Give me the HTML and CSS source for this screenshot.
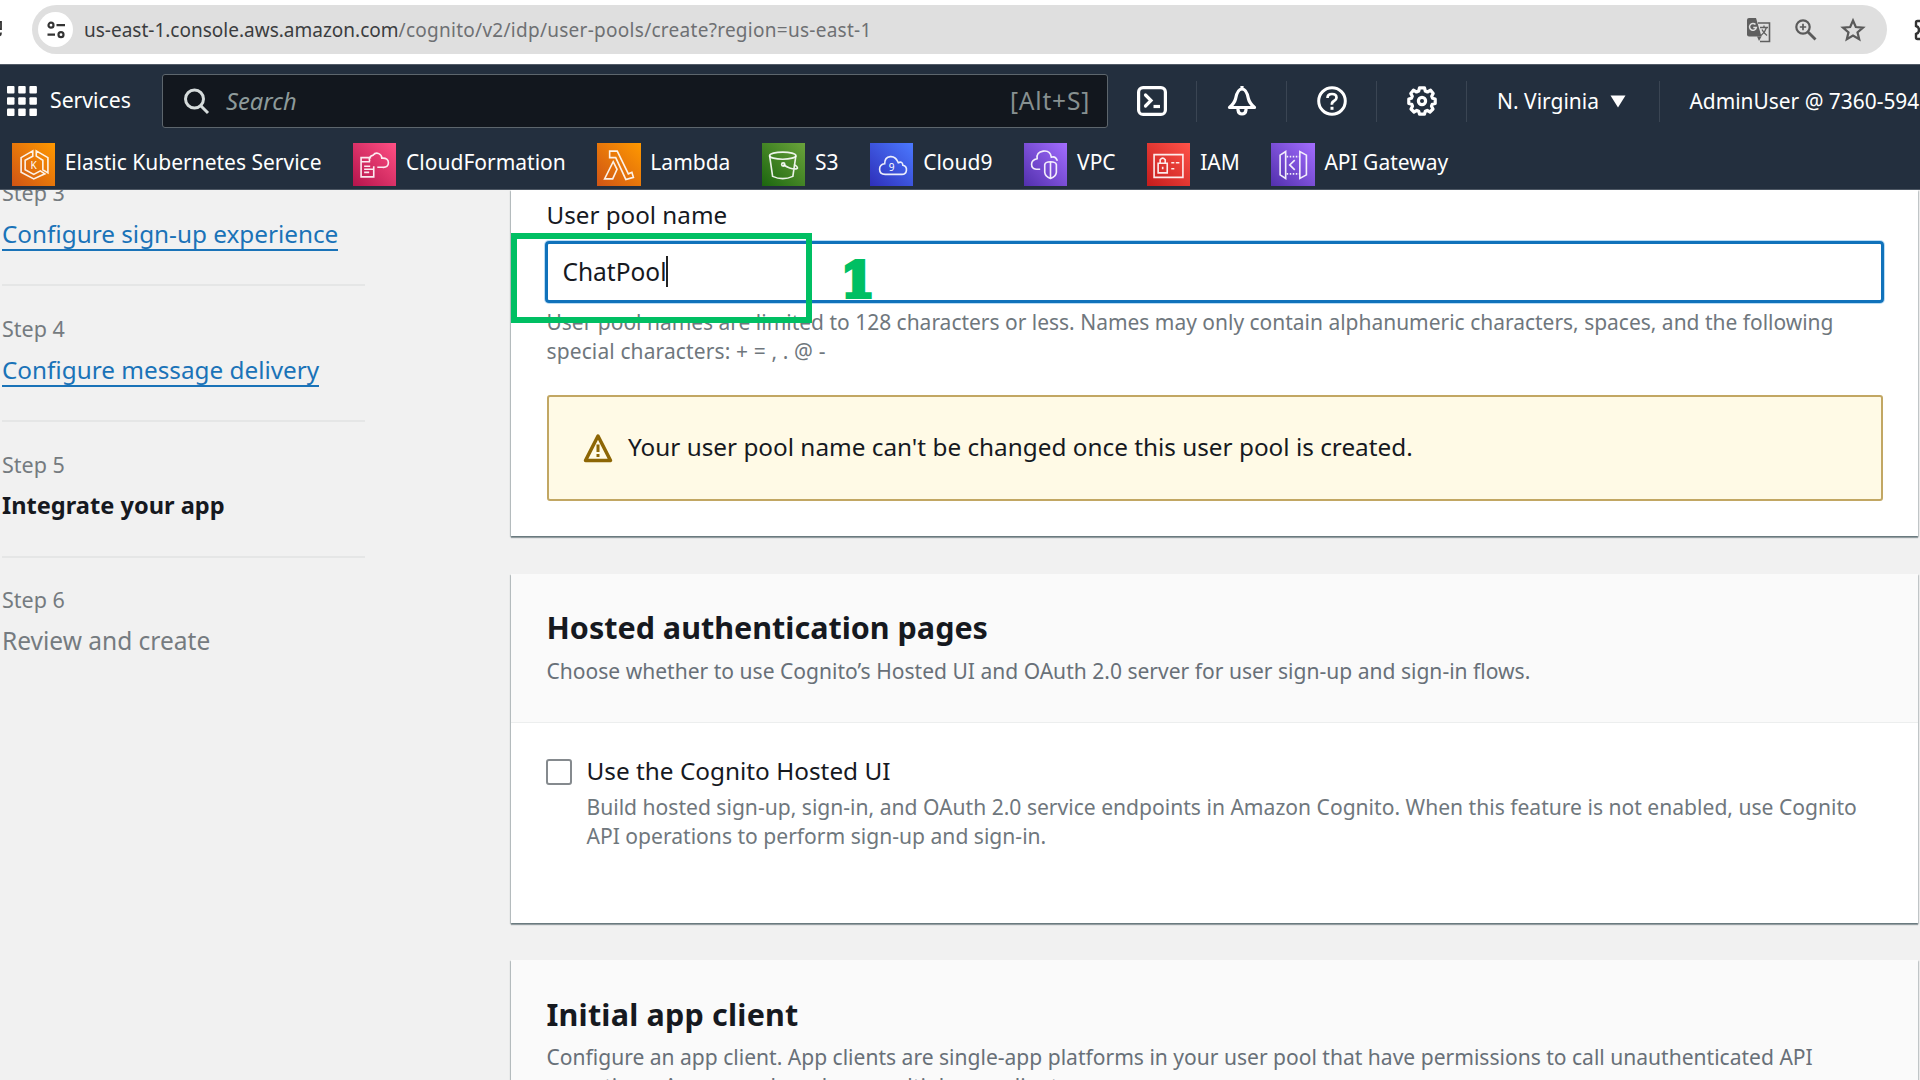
FILE: index.html
```html
<!DOCTYPE html>
<html lang="en">
<head>
<meta charset="utf-8">
<title>Create user pool</title>
<link rel="stylesheet" href="styles.css">
</head>
<body>
<div class="browser">
  <svg class="reload" width="4" height="20" viewBox="0 0 4 20"><path d="M0 2h1v7H0M0 15.500q1-1 1-3" fill="none" stroke="#333" stroke-width="1.800"/></svg>
  <div class="omnibox">
    <span class="site-info"><svg width="20" height="20" viewBox="0 0 20 20" fill="none" stroke="#333" stroke-width="2.200"><circle cx="5" cy="5.200" r="2.500"/><path d="M10.500 5.200H19M1.500 14.700H9"/><circle cx="15" cy="14.700" r="2.500"/></svg></span>
    <span class="host">us-east-1.console.aws.amazon.com</span><span class="path">/cognito/v2/idp/user-pools/create?region=us-east-1</span>
    <div class="omni-icons">
      <svg width="26" height="26" viewBox="0 0 26 26"><path d="M12 6H23.500V24.500H14" fill="none" stroke="#5f5f5f" stroke-width="1.600"/><path d="M1 3Q1 1 3 1H10L15.500 19.500H3Q1 19.500 1 17.500Z" fill="#5f5f5f"/><path d="M11 19.500H15.500L13 24Z" fill="#5f5f5f"/><path d="M9.500 7.600A3.400 3.400 0 1 0 10.300 10.500H7.300" fill="none" stroke="#e0e0e0" stroke-width="1.500"/><path d="M14 10.500H22M18 8.500V10.500M20.500 10.500Q19 15.500 15 18.500M16 12.500Q17.500 16 21 18.500" fill="none" stroke="#5f5f5f" stroke-width="1.300"/></svg>
      <svg width="24" height="24" viewBox="0 0 24 24" fill="none" stroke="#5a5a5a" stroke-width="2.200"><circle cx="9" cy="9" r="6.700"/><path d="M14 14L21.500 21.500" stroke-width="2.800"/><path d="M9 5.800V12.200M5.800 9H12.200" stroke-width="1.700"/></svg>
      <svg width="26" height="26" viewBox="0 0 26 26"><path d="M13 3.500L15.800 10L23 10.600L17.500 15.300L19.200 22.300L13 18.600L6.800 22.300L8.500 15.300L3 10.600L10.200 10Z" fill="none" stroke="#5a5a5a" stroke-width="2.200"/></svg>
    </div>
  </div>
  <svg class="extension" width="6" height="24" viewBox="0 0 6 24"><path d="M7 3H3.500Q2 3 2 4.500V8Q5 9 5 12T2 16V19.500Q2 21 3.500 21H7" fill="none" stroke="#333" stroke-width="2.400"/></svg>
</div>

<header class="nav">
  <div class="nav-top">
    <svg class="grid-icon" width="30" height="30" viewBox="0 0 30 30" fill="#fff"><rect width="7.500" height="7.500" rx="1"/><rect x="11.200" width="7.500" height="7.500" rx="1"/><rect x="22.400" width="7.500" height="7.500" rx="1"/><rect y="11.200" width="7.500" height="7.500" rx="1"/><rect x="11.200" y="11.200" width="7.500" height="7.500" rx="1"/><rect x="22.400" y="11.200" width="7.500" height="7.500" rx="1"/><rect y="22.400" width="7.500" height="7.500" rx="1"/><rect x="11.200" y="22.400" width="7.500" height="7.500" rx="1"/><rect x="22.400" y="22.400" width="7.500" height="7.500" rx="1"/></svg>
    <span class="services">Services</span>
    <div class="search">
      <svg width="27" height="27" viewBox="0 0 27 27" fill="none" stroke="#d5dbdb" stroke-width="3"><circle cx="11.500" cy="11" r="9"/><path d="M17.500 17.500L25 25"/></svg>
      <span class="placeholder">Search</span>
      <span class="shortcut">[Alt+S]</span>
    </div>
    <div class="tools">
      <span class="tool"><svg width="30" height="30" viewBox="0 0 30 30" fill="none" stroke="#fff" stroke-width="3.200"><rect x="1.600" y="1.600" width="26.800" height="26.800" rx="4.500"/><path d="M8.500 9L14 14.500L8.500 20" stroke-linecap="round"/><path d="M16.500 20.500H23"/></svg></span>
      <span class="tool"><svg width="30" height="30" viewBox="0 0 30 30" fill="none" stroke="#fff" stroke-width="3.200"><path d="M15 0V3M15 3C11 3 9.500 7.500 8.500 13Q7.500 17 2.500 21.500H27.500Q22.500 17 21.500 13C20.500 7.500 19 3 15 3Z" stroke-linejoin="round"/><path d="M11 22V24Q11.500 28 15 28T19 24V22"/></svg></span>
      <span class="tool"><svg width="30" height="30" viewBox="0 0 30 30" fill="none" stroke="#fff" stroke-width="3"><circle cx="15" cy="15" r="13.300"/><path d="M10.500 12Q10.500 8 15 8T19.500 11.700Q19.500 13.500 17 15T15 18.800" stroke-width="2.700"/><path d="M15 20.800V23.800" stroke-width="3"/></svg></span>
      <span class="tool"><svg width="30" height="30" viewBox="0 0 30 30" fill="none" stroke="#fff" stroke-width="3.200" stroke-linejoin="round"><path d="M12.500 1.800H17.500L18.300 5L20.500 6L23.600 4.200L26.200 7.500L24.700 10.200L25.500 12.300L28.200 13V17.500L25.300 18.200L24.500 20.200L26 23L23 26L20.200 24.400L18.300 25.200L17.500 28.200H12.500L11.700 25.200L9.800 24.400L7 26L4 23L5.500 20.200L4.700 18.200L1.800 17.500V13L4.500 12.300L5.300 10.200L3.800 7.500L6.400 4.200L9.500 6L11.700 5Z"/><circle cx="15" cy="15" r="3.600"/></svg></span>
    </div>
    <div class="region">N. Virginia<svg width="16" height="13" viewBox="0 0 16 13"><path d="M.5 .5H15.500L8 12.500Z" fill="#fff"/></svg></div>
    <div class="account">AdminUser @ 7360-594</div>
  </div>
  <div class="favorites">
    <div class="fav"><svg class="tile orange" viewBox="0 0 43 43"><path d="M20.500 7.800L9 14.500V29L21.500 35.500L32.500 30.500L28 27.500L21.500 31L13 26.500V17L20.500 13ZM24 7.800L35.500 14.500V29.500L30.500 26.500V17L24 13Z"/><text x="18.200" y="26" class="glyph">K</text></svg><span>Elastic Kubernetes Service</span></div>
    <div class="fav"><svg class="tile pink" viewBox="0 0 43 43"><path d="M18 14.500H8V33.500H20.500V23M8 18.500H17M11 23H17M11 26H21M11 29H16M16.500 18Q15 13 20 12Q22 9 25.500 10.500Q28.500 12 28.500 15Q35 14.500 35 19.500T29 24H24"/></svg><span>CloudFormation</span></div>
    <div class="fav"><svg class="tile orange" viewBox="0 0 43 43"><path d="M12.500 8H20L31 30.500L34.500 29L36 34L28.500 36L18.500 14.500H12.500ZM16 18.500L19.800 26L15.500 35.500H7.500Z"/></svg><span>Lambda</span></div>
    <div class="fav"><svg class="tile green" viewBox="0 0 43 43"><ellipse cx="20.500" cy="12.500" rx="13" ry="3.500"/><path d="M7.500 12.500L10.500 33Q20.500 37.500 30.500 33L33.500 12.500M21 21.500Q31 27.500 35 25Q35.500 23.500 31.500 21"/><circle cx="21" cy="21.300" r="1.600"/></svg><span>S3</span></div>
    <div class="fav"><svg class="tile blue" viewBox="0 0 43 43"><path d="M15 31Q9.500 31 9.500 26T14.500 20.500Q14.500 14 20 13.500T28 19.500Q32 17.500 32.500 22Q36.500 23 36 27T31.500 31Z"/><text x="18.500" y="27.500" class="glyph">9</text></svg><span>Cloud9</span></div>
    <div class="fav"><svg class="tile purple" viewBox="0 0 43 43"><path d="M16 26H12Q7.500 25.500 7.500 21T13 15.500Q12 9 19 8T27 14Q31 12.500 33 17.500M20.500 21.500Q21 18.500 26.200 18.500T32 21.500V29Q31.500 33 26.200 35Q21 33 20.500 29ZM26.200 19V35"/></svg><span>VPC</span></div>
    <div class="fav"><svg class="tile red" viewBox="0 0 43 43"><path d="M7 11.500H35.500V34H7ZM11 20H20V29.500H11ZM13 20V16.500Q15.500 13.500 18 16.500V20M15.500 23.500V26M24 19.500H27M28.500 19.500H32M24 25.500H27"/></svg><span>IAM</span></div>
    <div class="fav"><svg class="tile purple" viewBox="0 0 43 43"><path d="M14.500 8.500V35L9 31.500V12ZM28.500 8.500V35L35 31.500V12ZM9 14.500V29M23.500 17L18.500 21.700L23.500 26.500"/><path d="M15.500 13.500H28M15.500 30.500H28" stroke-dasharray="1.500 1.500"/></svg><span>API Gateway</span></div>
  </div>
</header>

<main class="page">
  <aside class="steps">
    <div class="step"><div class="step-no">Step 3</div><a class="step-link">Configure sign-up experience</a></div>
    <div class="step"><div class="step-no">Step 4</div><a class="step-link">Configure message delivery</a></div>
    <div class="step"><div class="step-no">Step 5</div><div class="step-title current">Integrate your app</div></div>
    <div class="step last"><div class="step-no">Step 6</div><div class="step-title">Review and create</div></div>
  </aside>
  <div class="content">
    <section class="card pool">
      <div class="label">User pool name</div>
      <div class="field">ChatPool<i class="caret"></i><div class="marker"></div><div class="marker-no">1</div></div>
      <p class="hint">User pool names are limited to 128 characters or less. Names may only contain alphanumeric characters, spaces, and the following<br><span class="chars">special characters: + = , . @ -</span></p>
      <div class="alert"><svg width="30" height="30" viewBox="0 0 30 30" fill="none" stroke="#8d6605" stroke-width="3.500"><path d="M15 3L27.500 27.500H2.500Z" stroke-linejoin="round"/><path d="M15 11.500V19M15 21V24" stroke-width="3"/></svg><span>Your user pool name can't be changed once this user pool is created.</span></div>
    </section>
    <section class="card">
      <div class="card-head"><h2>Hosted authentication pages</h2><p class="desc">Choose whether to use Cognito’s Hosted UI and OAuth 2.0 server for user sign-up and sign-in flows.</p></div>
      <div class="card-body">
        <span class="checkbox"></span>
        <div><div class="label">Use the Cognito Hosted UI</div><p class="hint">Build hosted sign-up, sign-in, and OAuth 2.0 service endpoints in Amazon Cognito. When this feature is not enabled, use Cognito<br>API operations to perform sign-up and sign-in.</p></div>
      </div>
    </section>
    <section class="card client">
      <div class="card-head"><h2>Initial app client</h2><p class="desc">Configure an app client. App clients are single-app platforms in your user pool that have permissions to call unauthenticated API<br>operations. A user pool can have multiple app clients.</p></div>
    </section>
  </div>
</main>
</body>
</html>
```
FILE: styles.css
```css
* { box-sizing: border-box; }
html, body { margin: 0; height: 1080px; overflow: hidden; }
body { font-family: "Noto Sans", "Open Sans", sans-serif; background: #f1f1f1; color: #16191f; white-space: nowrap; display: flex; flex-direction: column; }
svg { flex: none; display: block; }
p, h2 { margin: 0; }

.browser { height: 63.500px; flex: none; background: #fff; display: flex; align-items: center; padding-bottom: 4px; }
.reload { margin-right: 28px; }
.omnibox { width: 1855px; flex: none; height: 49px; border-radius: 25px; background: #dfdfdf; display: flex; align-items: center; padding: 0 21px 0 6px; font-size: 19px; line-height: 30px; }
.site-info { width: 35px; height: 35px; border-radius: 50%; background: #fff; display: flex; align-items: center; justify-content: center; margin-right: 11px; }
.host { color: #3b3d40; }
.path { color: #6e7073; letter-spacing: .27px; }
.omni-icons { display: flex; align-items: center; gap: 22px; margin-left: auto; }
.extension { margin-left: auto; }

.nav { height: 126.500px; flex: none; overflow: hidden; background: #232f3e; border-top: 1px solid #525b67; border-bottom: 1px solid #4d5763; color: #fff; font-size: 21px; line-height: 30px; }
.nav-top { height: 72px; display: flex; align-items: center; padding: 1px 0 0 7px; }
.nav-top > * { flex: none; }
.services { margin-left: 13px; width: 112px; font-size: 21.200px; margin-top: -2px; }
.search { width: 946px; height: 54px; background: #12171e; border: 1.500px solid #5d666d; border-radius: 3px; display: flex; align-items: center; padding: 0 17px 0 20px; }
.placeholder { margin-left: 16px; font-size: 23.700px; font-style: italic; color: #8d9a9a; }
.shortcut { margin-left: auto; font-size: 24.500px; color: #879090; letter-spacing: .8px; }
.tools { display: flex; }
.tool { width: 90px; height: 41px; display: flex; align-items: center; justify-content: center; border-right: 1px solid #3a4553; }
.tool:first-child { width: 89px; }
.region { width: 193px; height: 41px; border-right: 1px solid #3a4553; padding-left: 30px; display: flex; align-items: center; gap: 11px; }
.account { padding-left: 29.500px; font-size: 20.900px; }
.favorites { display: flex; align-items: center; gap: 31.300px; padding: 6px 0 0 11.500px; }
.fav { display: flex; align-items: center; gap: 9.800px; }
.fav span { margin-top: -4px; }
.tile { width: 43.500px; height: 43.500px; fill: none; stroke: #fff; stroke-width: 1.600px; stroke-opacity: .9; }
.glyph { font: 10px "Noto Sans", sans-serif; fill: #fff; stroke: none; }
.orange { background: linear-gradient(45deg, #cf5415, #ff9900); }
.pink { background: linear-gradient(45deg, #b5144c, #ff5084); }
.green { background: linear-gradient(45deg, #1c660f, #6aa33b); }
.blue { background: linear-gradient(45deg, #2e2fb9, #4b79ff); }
.purple { background: linear-gradient(45deg, #5230ad, #a36dff); }
.red { background: linear-gradient(45deg, #c41c1c, #ff5349); }

.page { flex: 1; min-height: 0; overflow: hidden; display: flex; }
.steps { width: 511px; flex: none; padding-left: 2px; margin-top: -39.300px; }
.step { width: 363px; height: 135.700px; border-bottom: 2px solid #e5e6e6; padding-top: 27.500px; display: flex; flex-direction: column; align-items: flex-start; gap: 10.800px; line-height: 30px; font-size: 24.300px; color: #757b80; }
.step.last { border: 0; }
.step-no { font-size: 21.500px; }
.step-link { color: #1a73b8; border-bottom: 2px solid #1a73b8; }
.step .current { color: #16191f; font-weight: 700; font-size: 23.600px; }
.step.last .step-title { font-size: 24.500px; }

.content { width: 1407px; flex: none; }
.card { background: #fff; margin-bottom: 37.300px; box-shadow: 0 2px 1px rgba(0, 28, 36, .35), -1px 1px 1px rgba(0, 28, 36, .2), 1px 1px 1px rgba(0, 28, 36, .15); }
.pool { padding: 9.800px 35px 36px 35.500px; height: 346.300px; }
.label { font-size: 24.200px; line-height: 30px; }
.field { position: relative; display: flex; align-items: center; height: 62px; margin: 11.200px -1px 5px -1.500px; border: 3px solid #1072bb; border-radius: 4px; box-shadow: 0 0 0 1px #b9dcf5; padding-left: 14.500px; font-size: 24.500px; }
.caret { width: 2px; height: 31px; background: #222; margin-left: -1px; }
.marker { position: absolute; left: -37px; top: -11px; width: 301px; height: 90px; border: 6.500px solid #00bf63; z-index: 1; }
.marker-no { position: absolute; left: 293px; top: 6px; font: 700 48px/60px "DejaVu Serif", serif; color: #00bf63; -webkit-text-stroke: 4px #00bf63; }
.hint, .desc { font-size: 21.060px; line-height: 29.300px; color: #6f777d; }
.pool .hint { font-size: 20.970px; }
.chars { letter-spacing: .13px; }
.desc { color: #687078; }
.alert { margin-top: 28.700px; height: 105.500px; border: 2px solid #c2a763; border-radius: 3px; background: #fffae6; display: flex; align-items: center; gap: 15px; padding-left: 34.500px; font-size: 24.320px; }
.alert span { margin-top: -3px; }
.card-head { height: 149px; padding: 35.700px 35.500px; background: #fafafa; border-bottom: 1.500px solid #eceeee; }
.card-head h2 { font-size: 30.500px; line-height: 36px; margin-bottom: 10.300px; }
.client h2 { letter-spacing: .2px; }
.card-body { height: 200px; padding: 33.300px 35px; display: flex; align-items: flex-start; }
.card-body .label { font-size: 24.350px; margin-bottom: 5.900px; }
.card-body .hint { font-size: 21.080px; }
.checkbox { width: 26px; height: 26px; flex: none; border: 2px solid #858a8e; border-radius: 3px; margin: 3px 14.500px 0 0; }
```
